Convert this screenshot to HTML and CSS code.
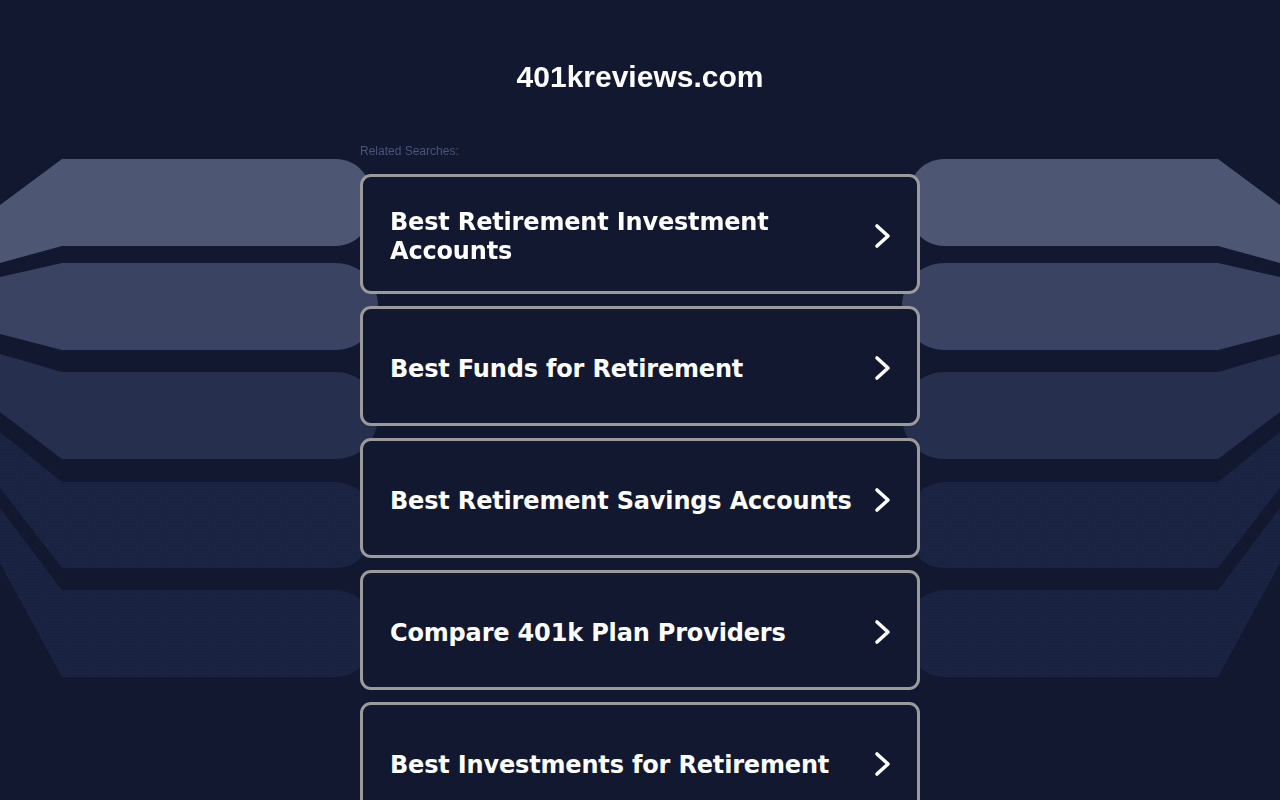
FILE: index.html
```html
<!DOCTYPE html>
<html lang="en">
<head>
<meta charset="utf-8">
<title>401kreviews.com</title>
<link rel="stylesheet" href="styles.css">
</head>
<body>
<svg class="backdrop" viewBox="0 0 1280 800" preserveAspectRatio="none" aria-hidden="true">
  <defs>
    <pattern id="dots" width="3" height="3" patternUnits="userSpaceOnUse">
      <rect x="0" y="0" width="1" height="1" fill="#161d38"/>
    </pattern>
    <g id="bands">
      <path fill="#4d5673" d="M0,205 L62,159 L335,159 C360,159 373,180 373,202 C373,224 360,246 335,246 L62,246 L0,263 Z"/>
      <path fill="#3a4361" d="M0,277 L62,263 L335,263 C362,263 378,284 378,306 C378,328 362,350 335,350 L62,350 L0,334 Z"/>
      <path fill="#262f4d" d="M0,354 L62,372 L335,372 C362,372 378,394 378,416 C378,438 362,459 335,459 L62,459 L0,412 Z"/>
      <path fill="#1c2444" d="M0,432 L62,482 L335,482 C360,482 374,504 374,525 C374,547 360,568 335,568 L62,568 L0,488 Z"/>
      <path fill="url(#dots)" d="M0,432 L62,482 L335,482 C360,482 374,504 374,525 C374,547 360,568 335,568 L62,568 L0,488 Z"/>
      <path fill="#1b2343" d="M0,508 L62,590 L335,590 C360,590 374,612 374,633 C374,655 360,677 335,677 L62,677 L0,563 Z"/>
      <path fill="url(#dots)" d="M0,508 L62,590 L335,590 C360,590 374,612 374,633 C374,655 360,677 335,677 L62,677 L0,563 Z"/>
    </g>
  </defs>
  <use href="#bands"/>
  <use href="#bands" transform="translate(1280,0) scale(-1,1)"/>
</svg>

<main class="page">
  <header class="header">
    <h1 class="domain">401kreviews.com</h1>
  </header>
  <p class="related">Related Searches:</p>
  <ul class="links">
    <li><a class="card" href="#"><span class="card-text">Best Retirement Investment Accounts</span><svg class="chev" viewBox="0 0 20 28"><polyline points="4,4 15,14 4,24"/></svg></a></li>
    <li><a class="card" href="#"><span class="card-text">Best Funds for Retirement</span><svg class="chev" viewBox="0 0 20 28"><polyline points="4,4 15,14 4,24"/></svg></a></li>
    <li><a class="card" href="#"><span class="card-text">Best Retirement Savings Accounts</span><svg class="chev" viewBox="0 0 20 28"><polyline points="4,4 15,14 4,24"/></svg></a></li>
    <li><a class="card" href="#"><span class="card-text">Compare 401k Plan Providers</span><svg class="chev" viewBox="0 0 20 28"><polyline points="4,4 15,14 4,24"/></svg></a></li>
    <li><a class="card" href="#"><span class="card-text">Best Investments for Retirement</span><svg class="chev" viewBox="0 0 20 28"><polyline points="4,4 15,14 4,24"/></svg></a></li>
  </ul>
</main>
</body>
</html>
```

FILE: styles.css
```css
html, body {
  margin: 0;
  padding: 0;
  background: #111830;
  height: 100%;
  overflow: hidden;
}

body {
  font-family: "Liberation Sans", Arial, sans-serif;
  color: #ffffff;
}

.backdrop {
  position: fixed;
  top: 0;
  left: 0;
  width: 1280px;
  height: 800px;
  z-index: 0;
}

.page {
  position: relative;
  z-index: 1;
  width: 560px;
  margin: 0 auto;
}

.header {
  padding-top: 59px;
  text-align: center;
}

.domain {
  margin: 0;
  font-family: "Liberation Sans", Arial, sans-serif;
  font-weight: bold;
  font-size: 30px;
  line-height: 36px;
  color: #ffffff;
}

.related {
  margin: 49px 0 0 0;
  font-size: 12px;
  line-height: 14px;
  color: #4b5577;
}

.links {
  list-style: none;
  margin: 16px 0 0 0;
  padding: 0;
  display: flex;
  flex-direction: column;
  gap: 12px;
}

.card {
  box-sizing: border-box;
  height: 120px;
  display: flex;
  align-items: center;
  justify-content: space-between;
  padding: 0 24px 0 27px;
  border: 3px solid #9b9b9b;
  border-radius: 11px;
  background: #111830;
  color: #ffffff;
  text-decoration: none;
}

.card-text {
  max-width: 470px;
  margin-top: 6px;
  font-family: "DejaVu Sans", Verdana, sans-serif;
  font-weight: bold;
  font-size: 24px;
  line-height: 29px;
  letter-spacing: -0.17px;
}

.chev {
  flex: none;
  width: 20px;
  height: 28px;
  margin-top: 3px;
  fill: none;
  stroke: #ffffff;
  stroke-width: 3.6;
  stroke-linecap: round;
  stroke-linejoin: round;
}
```
